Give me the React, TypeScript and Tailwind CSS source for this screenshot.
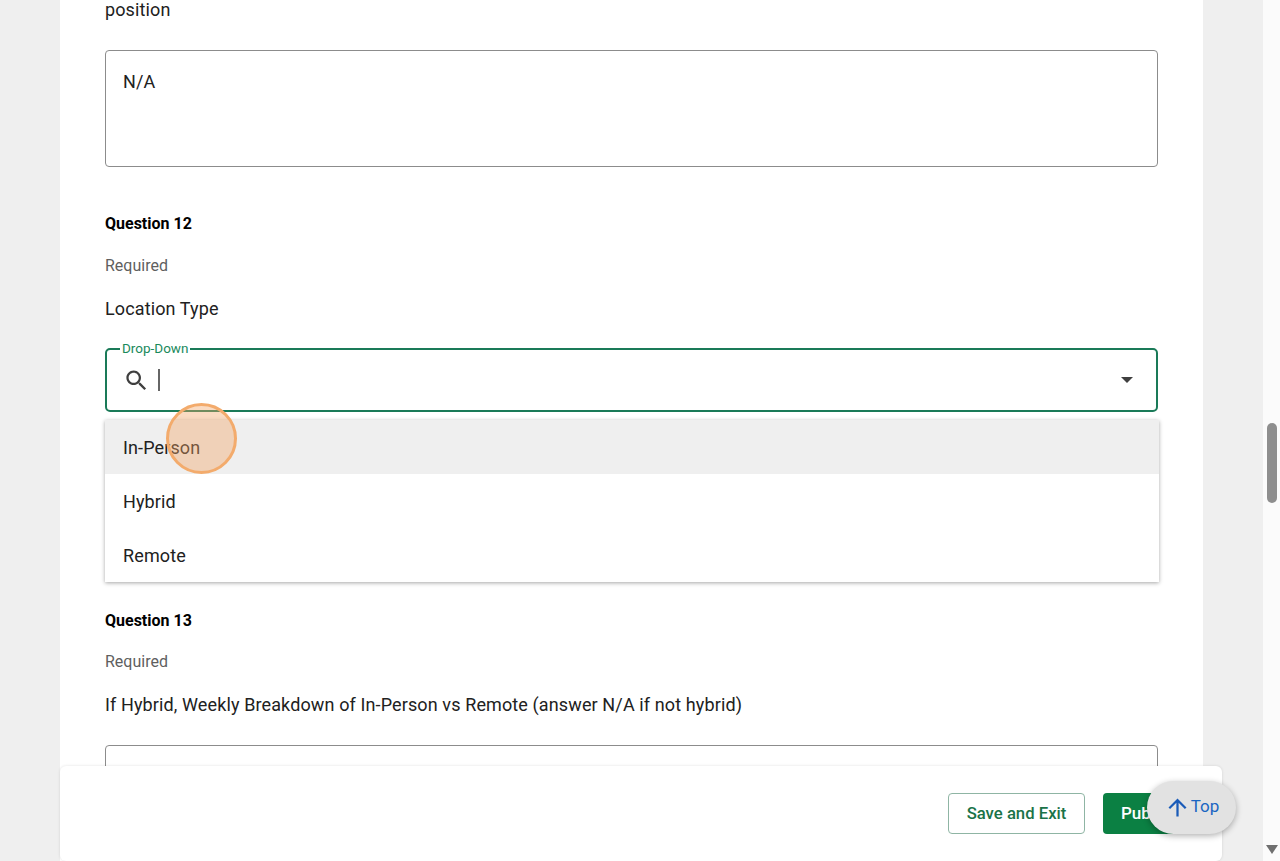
const options = ['In-Person', 'Hybrid', 'Remote']

function TextBox({ className, value }: { className: string; value?: string }) {
  return (
    <div className={`rounded-[4px] border border-[#8c8c8c] bg-white px-[17px] py-[20px] text-[18px] leading-[22px] tracking-[0.12px] text-[#212121] ${className}`}>
      {value}
    </div>
  )
}

export default function App() {
  return (
    <div className="relative flex h-[861px] w-[1280px] overflow-hidden bg-[#fbfbfb] font-['Roboto',sans-serif] text-[#212121]">
      <div className="h-full w-[1263px] shrink-0 bg-[#efefef] pl-[60px]">
        <main className="h-full w-[1143px] overflow-hidden bg-white px-[45px]">
          <p className="mt-[-2px] text-[18px] leading-[24px] tracking-[0.12px]">position</p>
          <TextBox className="mt-[28px] h-[117px]" value="N/A" />

          <h3 className="mt-[47px] text-[16px] font-bold leading-[20px] text-black">Question 12</h3>
          <p className="mt-[22px] text-[16px] leading-[20px] text-[#5f5f5f]">Required</p>
          <p className="mt-[21px] text-[18px] leading-[24px] tracking-[0.12px]">Location Type</p>

          {/* focused select, the option list sits over the next box */}
          <div className="relative mt-[27px]">
            <div className="flex h-[64px] items-center rounded-[5px] border-2 border-[#1a7a58] pl-[16px] pr-[23px]">
              <svg viewBox="0 0 24 24" className="h-[27px] w-[27px] fill-[#3f3f3f]">
                <path d="M15.5 14h-.79l-.28-.27C15.41 12.59 16 11.11 16 9.5 16 5.91 13.09 3 9.5 3S3 5.91 3 9.5 5.91 16 9.5 16c1.61 0 3.09-.59 4.23-1.57l.27.28v.79l5 4.99L20.49 19l-4.99-5zm-6 0C7.01 14 5 11.99 5 9.5S7.01 5 9.5 5 14 7.01 14 9.5 11.99 14 9.5 14z" />
              </svg>
              <span className="ml-[8px] h-[22px] w-[2px] bg-[#666]" />
              <svg viewBox="0 0 12 6" className="ml-auto h-[6px] w-[12px] fill-[#3f3f3f]">
                <path d="M0 0h12L6 6z" />
              </svg>
            </div>
            <span className="absolute left-[15px] top-[-8px] bg-white px-[2px] text-[13.5px] leading-[16px] text-[#1a8a5c]">Drop-Down</span>
            <ul className="absolute left-0 top-[72px] z-10 w-[1054px] bg-white py-0 text-[18px] shadow-[0_1px_4px_rgba(0,0,0,0.35)]">
              {options.map((o, i) => (
                <li key={o} className={`flex h-[54px] items-center px-[18px] tracking-[0.12px] ${i === 0 ? 'bg-[#efefef]' : ''}`}>
                  {o}
                </li>
              ))}
            </ul>
          </div>
          <TextBox className="mt-[34px] h-[117px]" />

          <h3 className="mt-[48px] text-[16px] font-bold leading-[20px] text-black">Question 13</h3>
          <p className="mt-[21px] text-[16px] leading-[20px] text-[#5f5f5f]">Required</p>
          <p className="mt-[21px] text-[18px] leading-[24px] tracking-[0.12px]">If Hybrid, Weekly Breakdown of In-Person vs Remote (answer N/A if not hybrid)</p>
          <TextBox className="mt-[28px] h-[117px]" />
        </main>
      </div>

      <div className="flex h-full w-[17px] flex-col items-center justify-between pb-[7px] pt-[423px]">
        <div className="h-[80px] w-[10px] rounded-full bg-[#8e8e8e]" />
        <svg viewBox="0 0 12 9" className="h-[9px] w-[12px] fill-[#6f6f6f]">
          <path d="M0 0h12L6 9z" />
        </svg>
      </div>

      {/* sticky action bar */}
      <div className="absolute left-[60px] top-[766px] flex h-[95px] w-[1162px] items-start justify-end gap-[18px] rounded-[6px] bg-white pr-[24px] pt-[27px] shadow-[0_0_3px_rgba(0,0,0,0.12)]">
        <button className="h-[41px] w-[137px] rounded-[4px] border border-[#8fb5a4] bg-white text-[16.7px] font-medium text-[#1a7348]">Save and Exit</button>
        <button className="h-[41px] w-[95px] rounded-[4px] bg-[#0b8043] pl-[18px] text-left text-[17px] font-medium text-white">Publish</button>
      </div>

      <button className="absolute left-[1147px] top-[781px] z-20 flex h-[53px] w-[89px] items-center justify-center rounded-full bg-[#e2e2e2] text-[17px] text-[#1a66c2] shadow-[0_2px_6px_rgba(0,0,0,0.3)]">
        <svg viewBox="0 0 24 24" className="h-[27px] w-[27px] fill-[#1a5bb8]">
          <path d="M4 12l1.41 1.41L11 7.83V20h2V7.83l5.58 5.59L20 12l-8-8-8 8z" />
        </svg>
        <span className="mb-[1px]">Top</span>
      </button>

      {/* click marker */}
      <div className="absolute left-[166px] top-[403px] z-20 h-[71px] w-[71px] rounded-full border-[3px] border-[#f3ab6c] bg-[#f3a566]/40" />
    </div>
  )
}
